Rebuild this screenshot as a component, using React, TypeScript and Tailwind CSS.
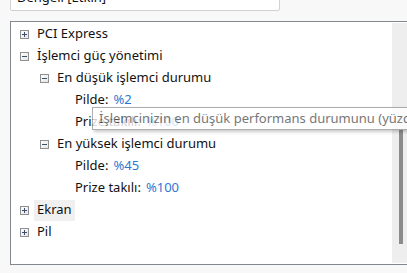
import React from "react";

const FONT = { fontFamily: '"Segoe UI", "Noto Sans", "Open Sans", sans-serif' };

function Expander({ open }: { open: boolean }) {
  return (
    <svg width="9" height="9" viewBox="0 0 9 9" className="shrink-0">
      <defs>
        <linearGradient id="eg" x1="0" y1="0" x2="1" y2="1">
          <stop offset="0" stopColor="#ffffff" />
          <stop offset="1" stopColor="#e4e4e4" />
        </linearGradient>
      </defs>
      <rect x="0.5" y="0.5" width="8" height="8" fill="url(#eg)" stroke="#8e8f8f" />
      <rect x="2" y="4" width="5" height="1" fill="#3c4d6e" />
      {!open && <rect x="4" y="2" width="1" height="5" fill="#3c4d6e" />}
    </svg>
  );
}

type Row = {
  level: number;
  label: string;
  value?: string;
  exp?: "open" | "closed";
  hl?: boolean;
};

const rows: Row[] = [
  { level: 0, label: "PCI Express", exp: "closed" },
  { level: 0, label: "İşlemci güç yönetimi", exp: "open" },
  { level: 1, label: "En düşük işlemci durumu", exp: "open" },
  { level: 2, label: "Pilde:", value: "%2" },
  { level: 2, label: "Prize takılı:", value: "%100" },
  { level: 1, label: "En yüksek işlemci durumu", exp: "open" },
  { level: 2, label: "Pilde:", value: "%45" },
  { level: 2, label: "Prize takılı:", value: "%100" },
  { level: 0, label: "Ekran", exp: "closed", hl: true },
  { level: 0, label: "Pil", exp: "closed" },
];

const indents = ["pl-[8px]", "pl-[28px]", "pl-[46px]"];

export default function App() {
  return (
    <div
      className="relative w-[407px] h-[273px] overflow-hidden bg-[#f8f8f8] text-[13px] text-[#111]"
      style={FONT}
    >
      {/* combobox */}
      <div className="ml-[10px] mt-[-15px] w-[270px] h-[26px] border border-[#d2d2d2] bg-white rounded-[2px] flex items-center pl-[6px] pr-[6px]">
        <span className="flex-1 whitespace-nowrap">Dengeli [Etkin]</span>
        <svg width="8" height="5" viewBox="0 0 8 5">
          <path d="M0.5 0.5 L4 4 L7.5 0.5" fill="none" stroke="#444" strokeWidth="1" />
        </svg>
      </div>

      {/* tree panel */}
      <div className="ml-[10px] mt-[10px] w-[399px] h-[244px] border border-[#828790] bg-white flex p-px">
        <div className="flex-1 flex flex-col">
          {rows.map((r, i) => (
            <div key={i} className={`h-[22px] flex items-center ${indents[r.level]} whitespace-nowrap`}>
              {r.exp ? <Expander open={r.exp === "open"} /> : <div className="w-[9px] shrink-0" />}
              <div
                className={`ml-[5px] h-[21px] px-[3px] flex items-center ${r.hl ? "bg-[#f0f0f0]" : ""}`}
              >
                <span>{r.label}</span>
                {r.value && <span className="ml-[5px] text-[#2b78d4]">{r.value}</span>}
              </div>
            </div>
          ))}
        </div>
        <div className="w-[15px] bg-[#eeeeee] flex justify-center relative">
          <div className="absolute left-[7px] top-[107px] w-[4px] h-[114px] bg-[#8b8b8b]" />
        </div>
      </div>

      {/* tooltip */}
      <div className="absolute left-[92px] top-[107px] h-[23px] w-[360px] border border-[#9a9a9a] bg-white opacity-[0.8] shadow-[2px_2px_3px_rgba(0,0,0,0.25)] flex items-center pl-[6px] whitespace-nowrap text-[#555]">
        İşlemcinizin en düşük performans durumunu (yüzde olarak) belirtin.
      </div>
    </div>
  );
}
